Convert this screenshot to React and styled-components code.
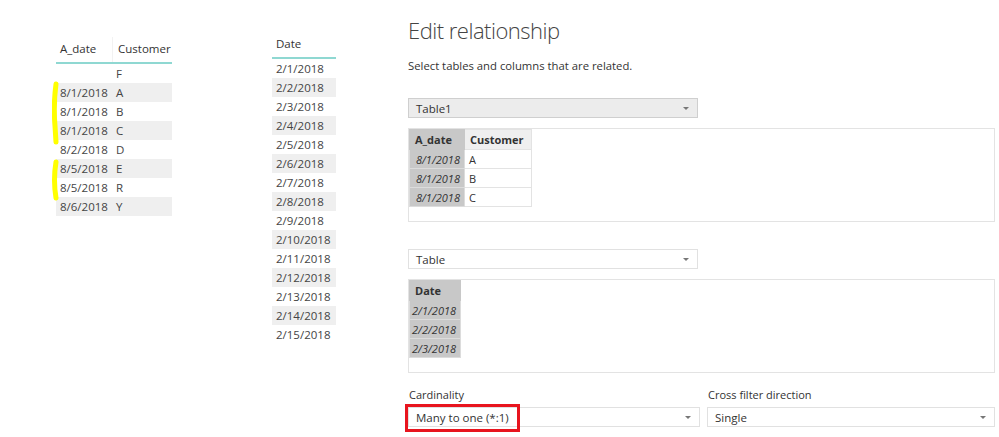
import styled, { createGlobalStyle } from 'styled-components';

const Global = createGlobalStyle`
  body {
    margin: 0;
    background: #fff;
    font-family: "Open Sans", "Noto Sans", sans-serif;
    color: #333;
  }
`;

const customers = [
  ['', 'F'],
  ['8/1/2018', 'A'],
  ['8/1/2018', 'B'],
  ['8/1/2018', 'C'],
  ['8/2/2018', 'D'],
  ['8/5/2018', 'E'],
  ['8/5/2018', 'R'],
  ['8/6/2018', 'Y'],
];

const dates = Array.from({ length: 15 }, (_, i) => `2/${i + 1}/2018`);

const App = () => {
  return (
    <>
      <Global />
      <Page>
        <LeftTable>
          <HeadRow>
            <HeadCell w={56}>A_date</HeadCell>
            <HeadCell w={60} divider>Customer</HeadCell>
          </HeadRow>
          {customers.map(([d, c], i) => (
            <Row key={i} shaded={i % 2 === 1}>
              <Cell w={56}>{d}</Cell>
              <Cell w={60}>{c}</Cell>
            </Row>
          ))}
          <Marker viewBox="0 0 8 140" width="8" height="140">
            <path d="M4 20 C2 35 2 50 3 62 L4 78" stroke="#ffff00" strokeWidth="5" fill="none" strokeLinecap="round" />
            <path d="M4 98 C2 110 2 122 4 134" stroke="#ffff00" strokeWidth="5" fill="none" strokeLinecap="round" />
          </Marker>
        </LeftTable>

        <DateTable>
          <HeadRow>
            <HeadCell w={64}>Date</HeadCell>
          </HeadRow>
          {dates.map((d, i) => (
            <Row key={d} shaded={i % 2 === 1}>
              <Cell w={64}>{d}</Cell>
            </Row>
          ))}
        </DateTable>

        <Panel>
          <Title>Edit relationship</Title>
          <Subtitle>Select tables and columns that are related.</Subtitle>

          <Select grey>
            <span>Table1</span>
            <Caret />
          </Select>
          <Preview>
            <Grid>
              <colgroup>
                <col style={{ width: 55 }} />
                <col style={{ width: 67 }} />
              </colgroup>
              <tbody>
                <tr>
                  <GH selected>A_date</GH>
                  <GH>Customer</GH>
                </tr>
                {['A', 'B', 'C'].map((c) => (
                  <tr key={c}>
                    <GD selected>8/1/2018</GD>
                    <GD>{c}</GD>
                  </tr>
                ))}
              </tbody>
            </Grid>
          </Preview>

          <Select top={132}>
            <span>Table</span>
            <Caret />
          </Select>
          <Preview>
            <Grid>
              <colgroup>
                <col style={{ width: 50 }} />
              </colgroup>
              <tbody>
                <tr>
                  <GH selected>Date</GH>
                </tr>
                {['2/1/2018', '2/2/2018', '2/3/2018'].map((d) => (
                  <tr key={d}>
                    <GD selected left>{d}</GD>
                  </tr>
                ))}
              </tbody>
            </Grid>
          </Preview>

          <Footer>
            <Field>
              <Label>Cardinality</Label>
              <Select highlight>
                <span>Many to one (*:1)</span>
                <Caret />
              </Select>
            </Field>
            <Field>
              <Label>Cross filter direction</Label>
              <Select>
                <span>Single</span>
                <Caret />
              </Select>
            </Field>
          </Footer>
        </Panel>
      </Page>
    </>
  );
};

export default App;

/* ================ layout ================ */

const Page = styled.div`
  display: flex;
  align-items: flex-start;
  width: 999px;
  height: 437px;
  padding-left: 56px;
  box-sizing: border-box;
  overflow: hidden;
  font-size: 12px;
`;

const LeftTable = styled.div`
  position: relative;
  margin-top: 37px;
  width: 116px;
`;

const DateTable = styled.div`
  margin-top: 32px;
  margin-left: 100px;
  width: 64px;
`;

const HeadRow = styled.div`
  display: flex;
  height: 25px;
  border-bottom: 2px solid #8fd8d2;
`;

const HeadCell = styled.div`
  width: ${(p) => p.w}px;
  box-sizing: border-box;
  line-height: 24px;
  color: #333;
  font-size: 11.5px;
  border-left: ${(p) => (p.divider ? '1px solid #f2f2f2' : 'none')};
  padding-left: ${(p) => (p.divider ? '5px' : '4px')};
`;

const Row = styled.div`
  display: flex;
  height: 19px;
  background: ${(p) => (p.shaded ? '#efefef' : '#fff')};
`;

const Cell = styled.div`
  width: ${(p) => p.w}px;
  box-sizing: border-box;
  padding-left: 4px;
  line-height: 19px;
  color: #444;
  font-size: 11.5px;
  white-space: nowrap;
`;

const Marker = styled.svg`
  position: absolute;
  left: -4px;
  top: 27px;
`;

const Panel = styled.div`
  margin-left: 72px;
  width: 587px;
  display: flex;
  flex-direction: column;
`;

const Title = styled.h1`
  margin: 14px 0 0;
  font-size: 22px;
  font-weight: 300;
  letter-spacing: -0.5px;
  line-height: 32px;
  color: #444;
`;

const Subtitle = styled.p`
  margin: 10px 0 0;
  font-size: 11.3px;
  line-height: 20px;
  color: #333;
`;

const Select = styled.div`
  margin-top: ${(p) => (p.top ? '27px' : p.highlight || !p.grey ? '0' : '22px')};
  width: ${(p) => (p.grey || p.top ? '290px' : '100%')};
  height: 20px;
  box-sizing: border-box;
  display: flex;
  align-items: center;
  justify-content: space-between;
  padding: 0 8px 0 7px;
  background: ${(p) => (p.grey ? '#ececec' : '#fff')};
  border: 1px solid ${(p) => (p.grey ? '#cfcfcf' : '#e1e1e1')};
  font-size: 11.5px;
  color: #333;
  position: relative;
  ${(p) =>
    p.highlight &&
    `&::after {
      content: '';
      position: absolute;
      left: -4px;
      top: -4px;
      width: 115px;
      height: 28px;
      box-sizing: border-box;
      border: 3px solid #e8141e;
    }`}
`;

const Caret = styled.i`
  width: 0;
  height: 0;
  border-left: 3px solid transparent;
  border-right: 3px solid transparent;
  border-top: 3px solid #777;
`;

const Preview = styled.div`
  margin-top: 10px;
  height: 94px;
  box-sizing: border-box;
  border: 1px solid #e3e3e3;
`;

const Grid = styled.table`
  border-collapse: collapse;
  table-layout: fixed;
  font-size: 11px;
`;

const GH = styled.th`
  height: 19px;
  padding: 0 5px;
  text-align: left;
  font-weight: 700;
  color: #333;
  white-space: nowrap;
  background: ${(p) => (p.selected ? '#c8c8c8' : '#efefef')};
  border: 1px solid ${(p) => (p.selected ? '#c8c8c8' : '#e3e3e3')};
`;

const GD = styled.td`
  height: 19px;
  box-sizing: border-box;
  padding: 0 4px 0 ${(p) => (p.left ? '2px' : '4px')};
  white-space: nowrap;
  text-align: ${(p) => (p.selected && !p.left ? 'right' : 'left')};
  font-style: ${(p) => (p.selected ? 'italic' : 'normal')};
  color: #333;
  background: ${(p) => (p.selected ? '#c8c8c8' : '#fff')};
  border: 1px solid ${(p) => (p.selected ? '#dcdcdc' : '#e3e3e3')};
`;

const Footer = styled.div`
  margin-top: 14px;
  display: flex;
  gap: 7px;
`;

const Field = styled.div`
  flex: 1;
  display: flex;
  flex-direction: column;
  &:last-child {
    flex: 0 0 288px;
  }
`;

const Label = styled.div`
  font-size: 11px;
  line-height: 16px;
  margin-bottom: 4px;
  padding-left: 1px;
  color: #333;
`;
